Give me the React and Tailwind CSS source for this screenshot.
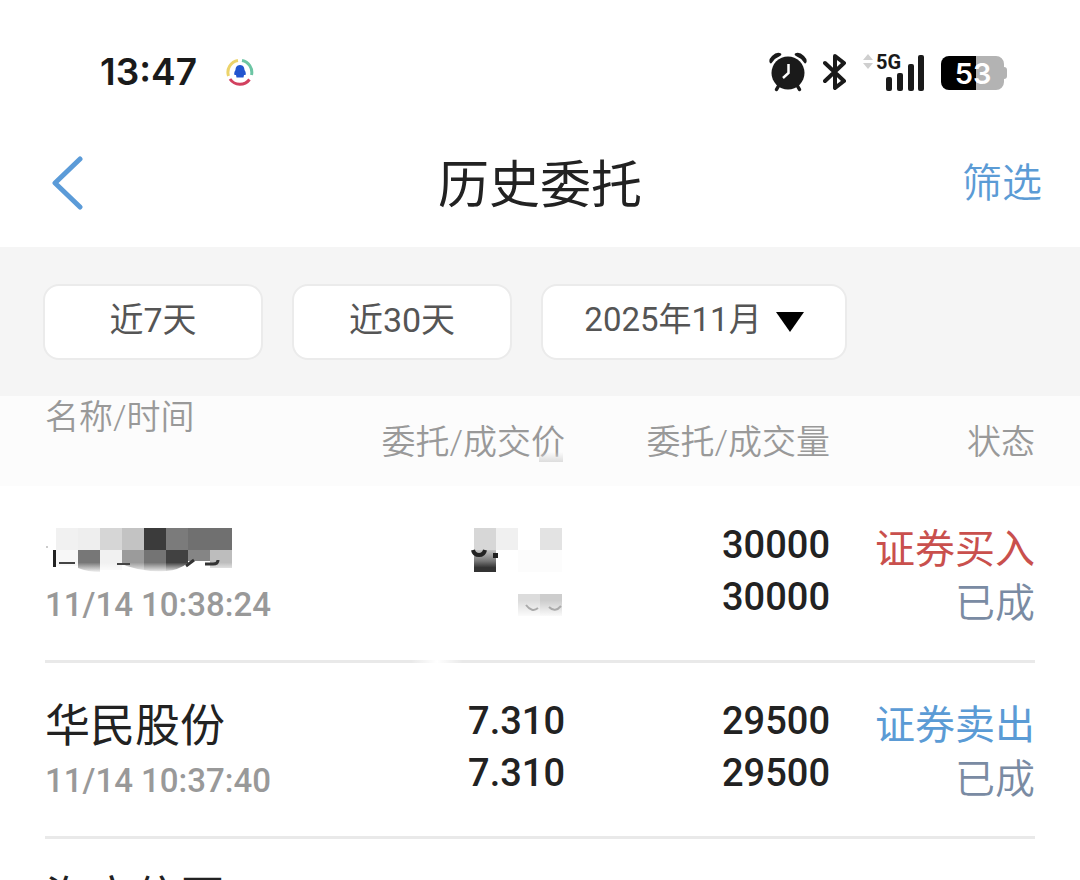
// src/App.jsx
const columns = 'grid grid-cols-[271fr_249fr_265fr_205fr]';

const ranges = ['近7天', '近30天'];

const orders = [
  {
    id: 1,
    name: null,
    time: '11/14 10:38:24',
    price: null,
    dealPrice: null,
    amount: '30000',
    dealAmount: '30000',
    side: 'buy',
  },
  {
    id: 2,
    name: '华民股份',
    time: '11/14 10:37:40',
    price: '7.310',
    dealPrice: '7.310',
    amount: '29500',
    dealAmount: '29500',
    side: 'sell',
  },
];

const AlarmIcon = () => (
  <svg viewBox="0 0 38 40" className="h-10 w-[38px]" fill="#1a1a1a" aria-hidden="true">
    <circle cx="19" cy="21" r="16.500" />
    <path d="M1 11 Q-1 8 3 4 Q8 -1 12 1.500 Q13 3 11 4 Q6 6 3 10.500 Q2 12 1 11 Z" />
    <path d="M37 11 Q39 8 35 4 Q30 -1 26 1.500 Q25 3 27 4 Q32 6 35 10.500 Q36 12 37 11 Z" />
    <path d="M9.500 34 L7.500 37.500 M28.500 34 L30.500 37.500" stroke="#1a1a1a" strokeWidth="3.500" strokeLinecap="round" />
    <path d="M19.500 12 V21 L14 26" fill="none" stroke="#fff" strokeWidth="2.500" />
  </svg>
);

const BluetoothIcon = () => (
  <svg viewBox="0 0 24 38" className="h-[38px] w-6" fill="none" stroke="#1a1a1a" strokeWidth="4" aria-hidden="true">
    <path d="M2 10 L21 28 L12 35 V3 L21 10 L2 28" strokeLinejoin="round" strokeLinecap="round" />
  </svg>
);

const SignalIcon = () => (
  <svg viewBox="0 0 62 40" className="h-10 w-[62px] overflow-visible" aria-hidden="true">
    <path d="M0 8 L5 2 L10 8 Z M0 11 L5 17 L10 11 Z" fill="#cfcfcf" />
    <text x="13" y="17" fontFamily="Roboto" fontSize="20" fontWeight="700" fill="#1a1a1a">
      5G
    </text>
    <g fill="#1a1a1a">
      <rect x="23" y="25" width="6" height="14" rx="2" />
      <rect x="34" y="21" width="6" height="18" rx="2" />
      <rect x="45" y="12" width="6" height="27" rx="2" />
      <rect x="55" y="3" width="6" height="36" rx="2" />
    </g>
  </svg>
);

const BatteryIcon = () => (
  <svg viewBox="0 0 66 36" className="h-9 w-[66px]" aria-hidden="true">
    <path d="M35 2 H55 a8 8 0 0 1 8 8 V13 q3 0 3 3 V22 q0 3 -3 3 V28 a8 8 0 0 1 -8 8 H35 Z" fill="#b3b3b3" />
    <path d="M8 2 H35 V36 H8 a8 8 0 0 1 -8 -8 V10 a8 8 0 0 1 8 -8 Z" fill="#000" />
    <text x="32" y="30" textAnchor="middle" fontFamily="Inter" fontSize="29" fontWeight="600" fill="#fff">
      53
    </text>
  </svg>
);

const AppIcon = () => (
  <svg viewBox="0 0 28 28" className="h-7 w-7" fill="none" strokeWidth="3" aria-hidden="true">
    <path d="M2.500 18 A12 12 0 0 1 12 2.500" stroke="#ecd36a" />
    <path d="M16 2.500 A12 12 0 0 1 25.500 17" stroke="#6cc5a4" />
    <path d="M4 21 A12 12 0 0 0 23.500 21.500" stroke="#d2415f" />
    <path
      d="M14 7 c-3.500 0 -4.500 3 -4.500 5 c-1.500 2 -1.500 4 -1 5 l1.500 0 l.5 2.500 h7 l.5 -2.500 l1.500 0 c.5 -1 .5 -3 -1 -5 c0 -2 -1 -5 -4.500 -5 Z"
      fill="#2255cf"
    />
  </svg>
);

// Mosaic over the hidden stock name
const MaskedName = () => (
  <svg viewBox="0 0 188 46" className="h-[46px] w-[188px]" role="img" aria-label="已隐藏">
    <defs>
      <linearGradient id="nameFade" x1="0" y1="0" x2="0" y2="1">
        <stop offset="0.3" stopColor="#fff" stopOpacity="0" />
        <stop offset="1" stopColor="#fff" />
      </linearGradient>
    </defs>
    <g>
      <rect x="11" width="22" height="22" fill="#f1f1f1" />
      <rect x="33" width="22" height="22" fill="#eeeeee" />
      <rect x="55" width="22" height="22" fill="#d6d6d6" />
      <rect x="77" width="22" height="22" fill="#c3c3c3" />
      <rect x="99" width="22" height="22" fill="#3b3b3b" />
      <rect x="121" width="22" height="22" fill="#7b7b7b" />
      <rect x="143" width="44" height="22" fill="#707070" />
      <rect x="11" y="22" width="22" height="16" fill="#f7f7f7" />
      <path d="M33 22 H55 V44 Q43 44 33 40 Z" fill="#777" />
      <rect x="55" y="22" width="22" height="20" fill="#f1f1f1" />
      <path d="M77 22 H99 V42 Q86 40 77 36 Z" fill="#9b9b9b" />
      <path d="M99 22 H121 V43 Q108 44 99 42 Z" fill="#747474" />
      <path d="M121 22 H143 V35 Q134 42 121 43 Z" fill="#414141" />
      <path d="M143 22 H165 V33 H143 Z" fill="#858585" />
      <rect x="165" y="22" width="22" height="18" fill="#bdbdbd" />
    </g>
    <rect x="11" y="30" width="176" height="15" fill="url(#nameFade)" />
    <rect x="8" y="22" width="3" height="17" fill="#222" />
    <rect x="1" y="18" width="2" height="2" fill="#ccc" />
    <path d="M14 35 H30 M72 36 H85" stroke="#444" strokeWidth="2" />
    <path d="M141 38 L149 32 M160 36 H168 Q173 36 173 32" fill="none" stroke="#333" strokeWidth="3" />
  </svg>
);

// Mosaic over the hidden order and deal price
const MaskedPrice = () => (
  <svg viewBox="0 0 96 90" className="h-[90px] w-24" role="img" aria-label="已隐藏">
    <defs>
      <linearGradient id="priceDark" x1="0" y1="0" x2="0" y2="1">
        <stop offset="0" stopColor="#c4c4c4" />
        <stop offset="0.5" stopColor="#777" />
        <stop offset="0.8" stopColor="#333" />
        <stop offset="1" stopColor="#333" />
      </linearGradient>
      <linearGradient id="priceFade" x1="0" y1="0" x2="0" y2="1">
        <stop offset="0.3" stopColor="#fff" stopOpacity="0" />
        <stop offset="1" stopColor="#fff" stopOpacity="0.9" />
      </linearGradient>
    </defs>
    <rect x="5" y="1" width="22" height="22" fill="#d7d7d7" />
    <rect x="27" y="1" width="22" height="22" fill="#f0f0f0" />
    <rect x="71" y="1" width="22" height="22" fill="#e3e3e3" />
    <rect x="5" y="23" width="22" height="22" fill="url(#priceDark)" />
    <path d="M4 23 Q5 28 10 28 Q15 28 16 23" fill="none" stroke="#222" strokeWidth="4" />
    <rect x="24" y="26" width="5" height="5" fill="#1f1f1f" />
    <rect x="49" y="23" width="44" height="22" fill="#fcfcfc" />
    <rect x="49" y="67" width="22" height="22" fill="#dcdcdc" />
    <rect x="71" y="67" width="22" height="22" fill="#cdcdcd" />
    <rect x="49" y="67" width="44" height="22" fill="url(#priceFade)" />
    <path d="M57 78 Q63 86 69 81 M80 80 Q86 86 92 79" fill="none" stroke="#aaa" strokeWidth="2" />
  </svg>
);

const StatusBar = () => (
  <div className="flex h-[120px] items-center justify-between pt-6 pr-[73px] pl-[100px]">
    <div className="flex items-center gap-[29px]">
      <span className="font-[Inter] text-[37px] leading-10 font-semibold text-[#1a1a1a]">13:47</span>
      <AppIcon />
    </div>
    <div className="flex items-center gap-4">
      <AlarmIcon />
      <BluetoothIcon />
      <SignalIcon />
      <BatteryIcon />
    </div>
  </div>
);

const Header = () => (
  <header className="grid h-[127px] grid-cols-[1fr_auto_1fr] items-center px-[38px]">
    <button type="button" aria-label="返回" className="justify-self-start pb-0.5 pl-3.5">
      <svg viewBox="0 0 32 54" className="h-[54px] w-8" fill="none" stroke="#5b9bd8" strokeWidth="5" aria-hidden="true">
        <path d="M28 3 L3 27 L28 51" strokeLinecap="round" strokeLinejoin="round" />
      </svg>
    </button>
    <h1 className="pt-1 text-[51px] leading-[60px] font-normal whitespace-nowrap">历史委托</h1>
    <button type="button" className="justify-self-end text-[40px] leading-[60px] font-[350] text-[#5b9bd5]">
      筛选
    </button>
  </header>
);

const filterButton =
  'flex h-19 items-center justify-center rounded-2xl border-2 border-[#ebebeb] bg-white pb-1 text-[#555]';

const Filters = () => (
  <div className="flex gap-[29px] bg-[#f5f5f5] px-[43px] pt-[37px] pb-9">
    {ranges.map(label => (
      <button key={label} type="button" className={`${filterButton} w-[220px] text-[34px]`}>
        {label}
      </button>
    ))}
    <button type="button" className={`${filterButton} w-[306px] gap-3.5 text-[33px]`}>
      2025年11月
      <svg viewBox="0 0 28 20" className="mt-1 h-5 w-7" aria-hidden="true">
        <path d="M0 0 H28 L14 20 Z" fill="#000" />
      </svg>
    </button>
  </div>
);

const OrderRow = ({ order }) => {
  const isBuy = order.side === 'buy';

  return (
    <tr className={`${columns} relative h-44 border-b-3 border-[#e9e9e9] text-right`}>
      <td className="pt-8 text-left">
        <div className="flex h-16 items-center text-[45px] leading-16">{order.name ?? <MaskedName />}</div>
        <div className="text-[33px] leading-11 font-medium whitespace-nowrap text-[#999]">{order.time}</div>
      </td>
      <td className="flex flex-col items-end pt-8 text-[38px] leading-[52px] font-medium">
        {order.price ? (
          <>
            <div>{order.price}</div>
            <div>{order.dealPrice}</div>
          </>
        ) : (
          <div className="pt-2">
            <MaskedPrice />
            {/* The mask brush also wipes out a bit of the divider */}
            <span className="absolute -bottom-[3px] left-[37%] h-[3px] w-13 bg-linear-to-r from-transparent via-white to-transparent" />
          </div>
        )}
      </td>
      <td className="pt-8 text-[38px] leading-[52px] font-medium">
        <div>{order.amount}</div>
        <div>{order.dealAmount}</div>
      </td>
      <td className="pt-9 text-[40px] leading-[54px]">
        <div className={isBuy ? 'text-[#c9504d]' : 'text-[#5b9bd5]'}>{isBuy ? '证券买入' : '证券卖出'}</div>
        <div className="font-[350] text-[#7a8ba3]">已成</div>
      </td>
    </tr>
  );
};

export default function App() {
  return (
    <div className="h-screen overflow-hidden bg-white font-[Roboto,'Noto_Sans_CJK_SC',sans-serif] text-[#222]">
      <StatusBar />
      <Header />
      <Filters />
      <table className="block">
        <thead className="block bg-[#fcfcfc] px-[45px] text-[34px] text-[#999]">
          <tr className={`${columns} h-[90px] text-right leading-[42px]`}>
            <th className="text-left font-[350]">名称/时间</th>
            <th className="relative pt-[25px] font-[350]">
              委托/成交价
              <span className="absolute right-0.5 bottom-6 h-2.5 w-6 bg-linear-to-b from-transparent to-[#dddddd]" />
            </th>
            <th className="pt-[25px] font-[350]">委托/成交量</th>
            <th className="pt-[25px] font-[350]">状态</th>
          </tr>
        </thead>
        <tbody className="block px-[45px] pt-px">
          {orders.map(order => (
            <OrderRow key={order.id} order={order} />
          ))}
          <tr className="block">
            <td className="block pt-7 text-[45px] leading-16">海立信国</td>
          </tr>
        </tbody>
      </table>
    </div>
  );
}
